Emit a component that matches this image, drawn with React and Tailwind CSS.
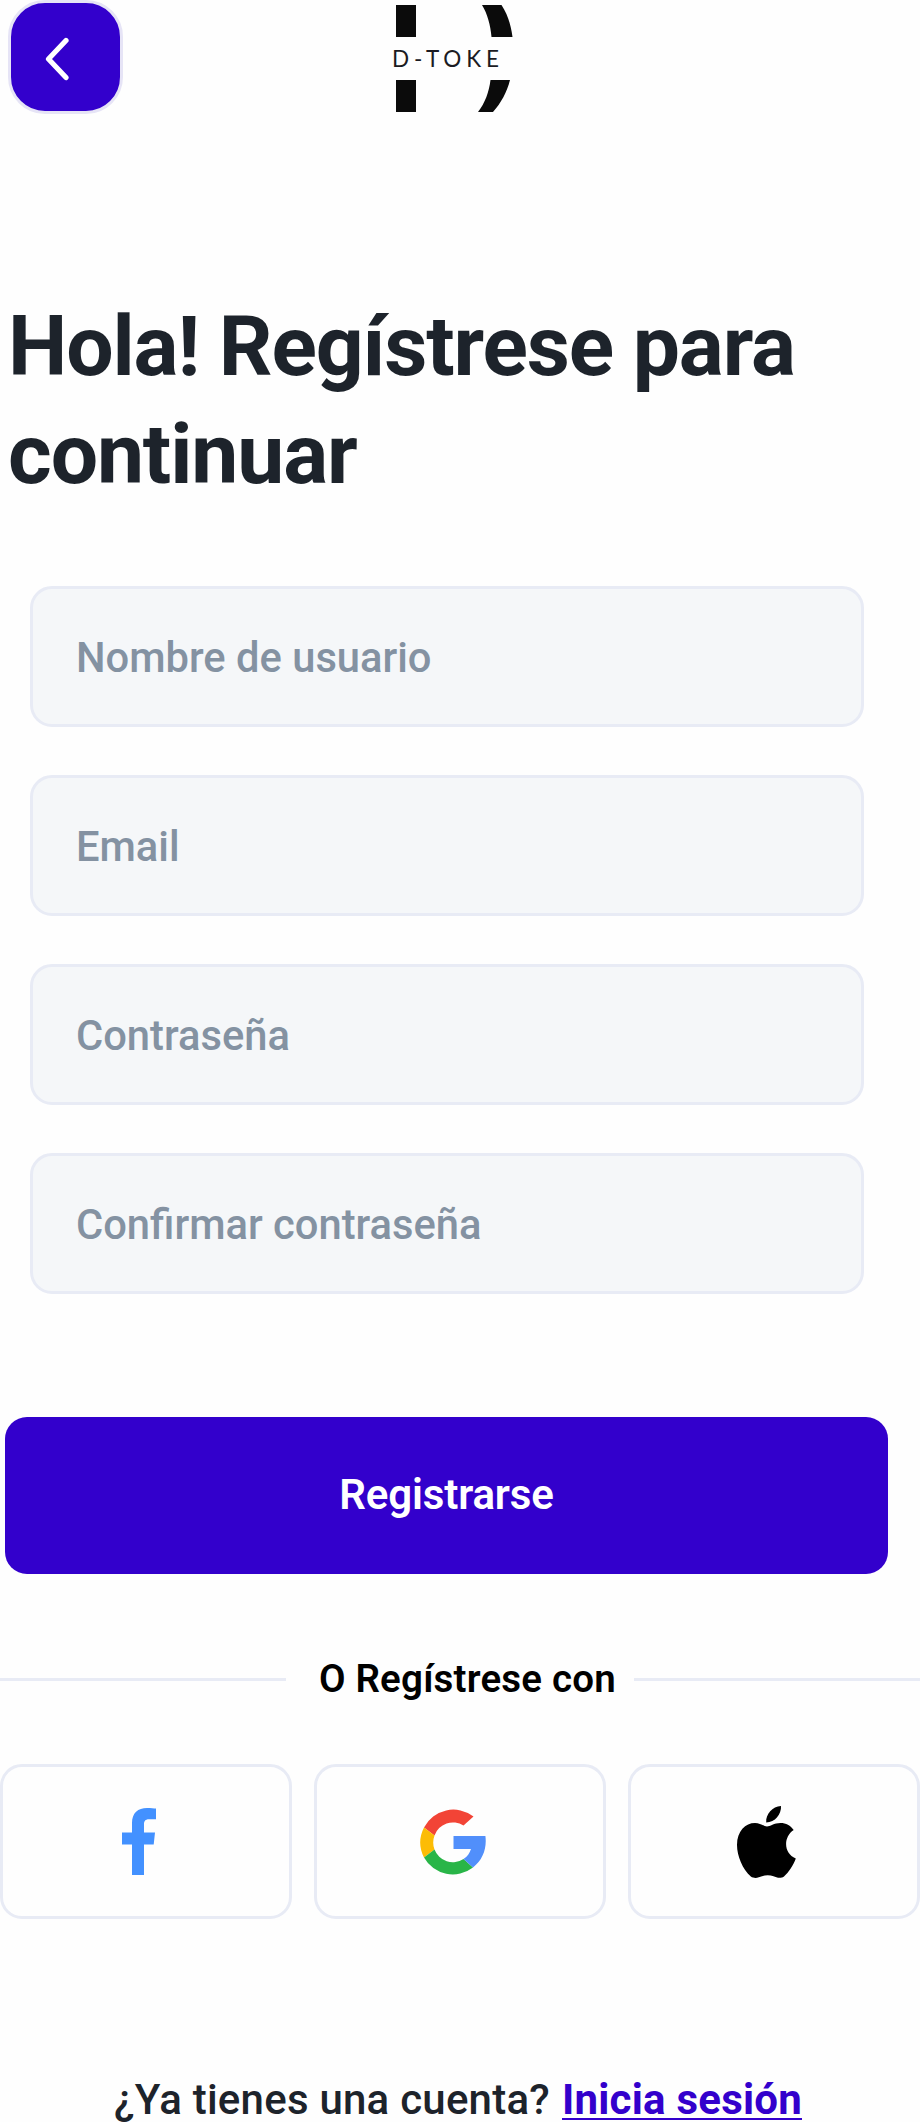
const fields = ["Nombre de usuario", "Email", "Contraseña", "Confirmar contraseña"];

function Logo() {
  return (
    <div className="ml-[269px] mt-[5px] flex h-[107px] w-[122px] flex-col justify-between">
      <svg className="ml-1 h-8 w-[118px]" viewBox="0 0 118 32" fill="#0b0b0b">
        <rect width="20" height="32" />
        <path d="M86 0H105.500C111.500 9 115 20 116.500 32H95.500C94.500 20 91.500 9 86 0Z" />
      </svg>
      <div className="whitespace-nowrap font-['Lato'] text-[22.5px] leading-[32px] tracking-[4.9px] text-[#1b1b22]">
        D-TOKE
      </div>
      <svg className="ml-1 h-8 w-[118px]" viewBox="0 0 118 32" fill="#0b0b0b">
        <rect width="20" height="32" />
        <path d="M94.500 0H114C111 12 105 23 97 32H82C89 23 93 12 94.500 0Z" />
      </svg>
    </div>
  );
}

function Facebook() {
  return (
    <svg className="mr-[14px] h-[67px] w-[34px]" viewBox="0 0 34 67" fill="#4391ff">
      <path d="M10 67V36.500H0V24.500H10V15C10 5 16 0 25 0C29 0 32 .4 34 .6V11.300H27C23 11.300 22 13.500 22 16.500V24.500H33L31.700 36.500H22V67Z" />
    </svg>
  );
}

function Google() {
  return (
    <svg className="mr-[14px] h-[66px] w-[66px]" viewBox="0 0 66 66" fill="none">
      <path d="M4 18.500A33 33 0 0 1 53.500 7.500L43.500 16.500A19.500 19.500 0 0 0 14.500 26.500Z" fill="#f24436" />
      <path d="M4 18.500A33 33 0 0 0 4 48.500L14.500 40.500A20 20 0 0 1 14.500 26.500Z" fill="#fcbc05" />
      <path d="M4 48.500A33 33 0 0 0 53 58.500L43.500 50A19.500 19.500 0 0 1 14.500 40.500Z" fill="#29b548" />
      <path d="M33.500 27H65.400C67 39 63 51 53 58.500L43.500 50C47.500 47.500 49.500 44.500 51 40H33.500Z" fill="#518ffb" />
    </svg>
  );
}

function Apple() {
  return (
    <svg className="mr-[15px] h-[72px] w-[59px]" viewBox="0 0 59 72" fill="#000">
      <path d="M44 0C44.500 8 38 16.500 29.200 16.500C28.500 8 35.500 .5 44 0Z" />
      <path d="M56.700 24C46 31 46.500 47.500 58.800 52.500C56.500 59 51.500 66.500 47 70.500C43.500 73 39.500 71.500 36.500 70.300C33 68.900 28.500 68.900 25 70.300C21.500 71.700 17.500 73 13.800 70.500C5.500 63 0 50 0 39C0 25 8.500 17 18 17C23 17 27 20.500 30 20.500C33 20.500 37 17 43.500 17C49 17 53.500 19.500 56.700 24Z" />
    </svg>
  );
}

export default function App() {
  return (
    <main className="flex h-[2122px] w-[920px] flex-col overflow-hidden bg-[#fefefe] font-['Roboto',sans-serif]">
      <header className="flex h-[120px] shrink-0 items-start pl-2">
        <button className="flex h-[114px] w-[115px] shrink-0 items-center justify-center rounded-[37px] border-[3px] border-[#e6e4f6] bg-[#3300cc] pr-[18px] pt-1">
          <svg className="h-[44px] w-[26px]" viewBox="0 0 26 44" fill="none" stroke="#fff" strokeWidth="5.200" strokeLinecap="round" strokeLinejoin="round">
            <path d="M22 3.500L4.500 22L22 40.500" />
          </svg>
        </button>
        <Logo />
      </header>

      <h1 className="mt-[173px] h-[216px] shrink-0 whitespace-nowrap pl-2 text-[84px] font-bold leading-[108px] tracking-[-1.130px] text-[#1d232b]">
        Hola! Regístrese para
        <br />
        continuar
      </h1>

      <form className="mt-[77px] flex shrink-0 flex-col">
        <div className="ml-[30px] flex w-[834px] flex-col gap-12">
          {fields.map((label) => (
            <input
              key={label}
              placeholder={label}
              className="h-[141px] rounded-[22px] border-[3px] border-[#e8ebf5] bg-[#f5f7f9] pl-[43px] pt-0.5 text-[41.700px] font-medium text-[#8492a2] placeholder:text-[#8492a2]"
            />
          ))}
        </div>
        <button type="button" className="ml-[5px] mt-[123px] h-[157px] w-[883px] rounded-[22px] bg-[#3300cc] pb-[3px] text-[42px] font-semibold tracking-[-0.150px] text-white">
          Registrarse
        </button>
      </form>

      <div className="mt-[79px] flex h-[52px] shrink-0 items-center justify-between">
        <span className="h-[3px] w-[286px] bg-[#e8ebf5]" />
        <span className="whitespace-nowrap pl-[15px] text-[38.500px] font-semibold leading-[52px] tracking-[0.200px] text-black">O Regístrese con</span>
        <span className="h-[3px] w-[286px] bg-[#e8ebf5]" />
      </div>

      <div className="mt-[59px] grid shrink-0 grid-cols-3 gap-[22px]">
        {[Facebook, Google, Apple].map((Icon, i) => (
          <button key={i} className="flex h-[155px] items-center justify-center rounded-[22px] border-[3px] border-[#e8ebf5]">
            <Icon />
          </button>
        ))}
      </div>

      <p className="ml-[114px] mt-[159px] flex h-[44px] shrink-0 gap-3 whitespace-nowrap text-[42px] font-medium leading-[44px] tracking-[0.230px] text-[#1d232b]">
        <span>¿Ya tienes una cuenta?</span>
        <a className="h-[42px] border-b-2 border-[#3300cc] font-bold text-[#3300cc]">Inicia sesión</a>
      </p>
    </main>
  );
}
